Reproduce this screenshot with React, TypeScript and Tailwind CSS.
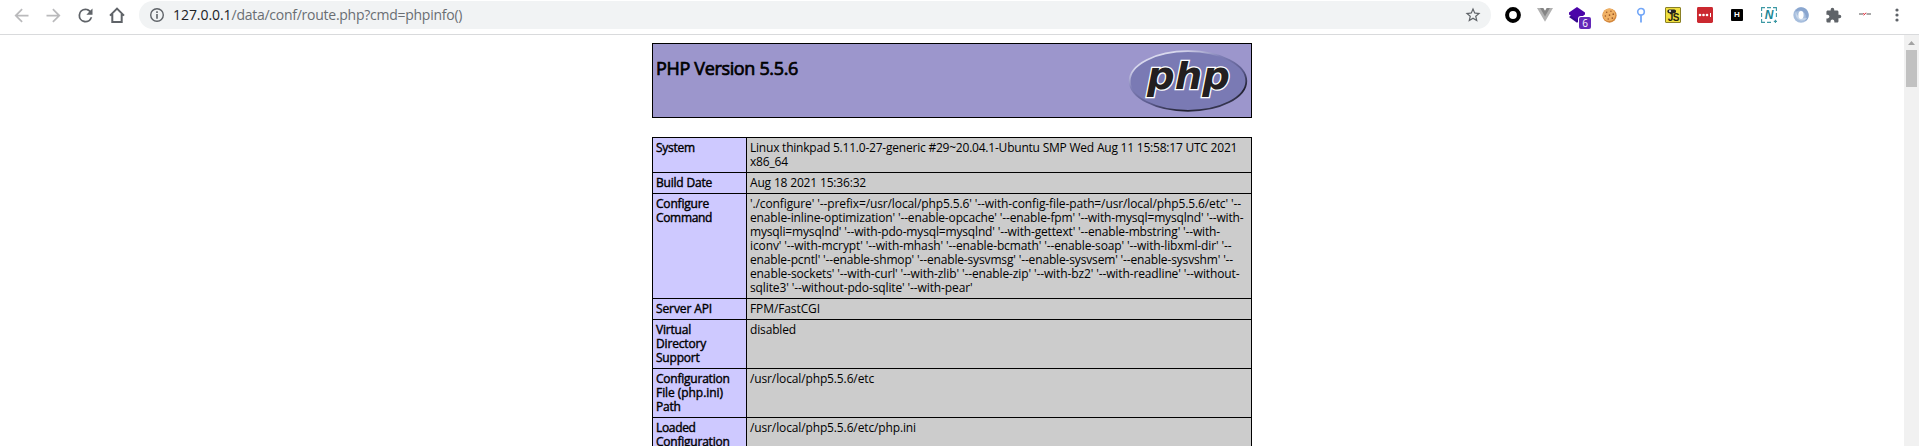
import type { ReactNode } from "react";

type Line = { text: string; spacing: string };

const rows: { label: Line[]; value: Line[] }[] = [
  {
    label: [{ text: "System", spacing: "tracking-[-0.28px]" }],
    value: [
      {
        text: "Linux thinkpad 5.11.0-27-generic #29~20.04.1-Ubuntu SMP Wed Aug 11 15:58:17 UTC 2021",
        spacing: "tracking-[-0.217px]",
      },
      { text: "x86_64", spacing: "tracking-[-0.16px]" },
    ],
  },
  {
    label: [{ text: "Build Date", spacing: "tracking-[-0.2px]" }],
    value: [{ text: "Aug 18 2021 15:36:32", spacing: "tracking-[-0.17px]" }],
  },
  {
    label: [
      { text: "Configure", spacing: "tracking-[-0.19px]" },
      { text: "Command", spacing: "tracking-[-0.33px]" },
    ],
    value: [
      {
        text: "'./configure' '--prefix=/usr/local/php5.5.6' '--with-config-file-path=/usr/local/php5.5.6/etc' '--",
        spacing: "tracking-[-0.114px]",
      },
      {
        text: "enable-inline-optimization' '--enable-opcache' '--enable-fpm' '--with-mysql=mysqlnd' '--with-",
        spacing: "tracking-[-0.147px]",
      },
      {
        text: "mysqli=mysqlnd' '--with-pdo-mysql=mysqlnd' '--with-gettext' '--enable-mbstring' '--with-",
        spacing: "tracking-[-0.156px]",
      },
      {
        text: "iconv' '--with-mcrypt' '--with-mhash' '--enable-bcmath' '--enable-soap' '--with-libxml-dir' '--",
        spacing: "tracking-[-0.12px]",
      },
      {
        text: "enable-pcntl' '--enable-shmop' '--enable-sysvmsg' '--enable-sysvsem' '--enable-sysvshm' '--",
        spacing: "tracking-[-0.155px]",
      },
      {
        text: "enable-sockets' '--with-curl' '--with-zlib' '--enable-zip' '--with-bz2' '--with-readline' '--without-",
        spacing: "tracking-[-0.119px]",
      },
      { text: "sqlite3' '--without-pdo-sqlite' '--with-pear'", spacing: "tracking-[-0.12px]" },
    ],
  },
  {
    label: [{ text: "Server API", spacing: "tracking-[-0.11px]" }],
    value: [{ text: "FPM/FastCGI", spacing: "tracking-[-0.1px]" }],
  },
  {
    label: [
      { text: "Virtual", spacing: "tracking-[-0.2px]" },
      { text: "Directory", spacing: "tracking-[-0.17px]" },
      { text: "Support", spacing: "tracking-[-0.21px]" },
    ],
    value: [{ text: "disabled", spacing: "tracking-[-0.15px]" }],
  },
  {
    label: [
      { text: "Configuration", spacing: "tracking-[-0.23px]" },
      { text: "File (php.ini)", spacing: "tracking-[-0.06px]" },
      { text: "Path", spacing: "tracking-[-0.25px]" },
    ],
    value: [{ text: "/usr/local/php5.5.6/etc", spacing: "tracking-[-0.129px]" }],
  },
  {
    label: [
      { text: "Loaded", spacing: "tracking-[-0.34px]" },
      { text: "Configuration", spacing: "tracking-[-0.23px]" },
    ],
    value: [{ text: "/usr/local/php5.5.6/etc/php.ini", spacing: "tracking-[-0.129px]" }],
  },
];

function Lines({ lines }: { lines: Line[] }) {
  return (
    <>
      {lines.map((l) => (
        <div key={l.text} className={`h-3.5 whitespace-pre ${l.spacing}`}>
          {l.text}
        </div>
      ))}
    </>
  );
}

function Slot({ children }: { children: ReactNode }) {
  return <div className="relative flex h-[30px] w-8 shrink-0 items-center justify-center">{children}</div>;
}

function MaterialIcon({ d, className }: { d: string; className: string }) {
  return (
    <svg viewBox="0 0 24 24" className={`shrink-0 fill-current ${className}`}>
      <path d={d} />
    </svg>
  );
}

function Toolbar() {
  return (
    <header className="flex h-[35px] shrink-0 items-start border-b border-[#d9dadc] bg-white pl-[5px] text-[#5f6368]">
      <Slot>
        <MaterialIcon className="size-[21px] text-[#bababc]" d="M20 11H7.83l5.59-5.59L12 4l-8 8 8 8 1.41-1.41L7.83 13H20v-2z" />
      </Slot>
      <Slot>
        <MaterialIcon className="size-[21px] text-[#bababc]" d="M12 4l-1.41 1.41L16.17 11H4v2h12.17l-5.58 5.59L12 20l8-8z" />
      </Slot>
      <Slot>
        <MaterialIcon
          className="size-[21px]"
          d="M17.65 6.35A7.96 7.96 0 0 0 12 4a8 8 0 1 0 7.73 10h-2.08A6 6 0 1 1 12 6c1.66 0 3.14.69 4.22 1.78L13 11h7V4l-2.35 2.35z"
        />
      </Slot>
      <Slot>
        <svg viewBox="0 0 16 16" className="size-4 fill-none stroke-current stroke-2">
          <path d="M1 8.6L8 1.6l7 7M3.3 7v8h9.4V7" />
        </svg>
      </Slot>
      <div className="mt-px ml-1.5 mr-[6px] flex h-7 flex-1 items-center rounded-full bg-[#f1f3f4] pl-[11px] pr-[9px]">
        <svg viewBox="0 0 14 14" className="size-3.5 shrink-0">
          <circle cx="7" cy="7" r="6.3" className="fill-none stroke-current stroke-[1.4]" />
          <path d="M6.2 3.3h1.6v1.6H6.2zM6.2 6h1.6v4.7H6.2z" className="fill-current" />
        </svg>
        <div className="ml-[9px] flex-1 whitespace-pre font-['Open_Sans',sans-serif] text-sm leading-7">
          <span className="tracking-[-0.06px] text-[#202124]">127.0.0.1</span>
          <span className="tracking-[-0.26px] text-[#6a6e73]">/data/conf/route.php?cmd=phpinfo()</span>
        </div>
        <MaterialIcon
          className="size-[18px]"
          d="M22 9.24l-7.19-.62L12 2 9.19 8.63 2 9.24l5.46 4.73L5.82 21 12 17.27 18.18 21l-1.63-7.03L22 9.24zM12 15.4l-3.76 2.27 1-4.28-3.32-2.88 4.38-.38L12 6.1l1.71 4.04 4.38.38-3.32 2.88 1 4.28L12 15.4z"
        />
      </div>
      <div className="mr-1.5 flex">
        <Slot>
          <svg viewBox="0 0 16 16" className="size-4">
            <circle cx="8" cy="8" r="5.9" fill="none" stroke="#000" strokeWidth="4" />
          </svg>
        </Slot>
        <Slot>
          <svg viewBox="0 0 16 14" className="h-3.5 w-4">
            <path d="M0 0h6.2L8 3l1.8-3H16L8 13.8z" fill="#b1b1b1" />
            <path d="M3.1 0h3.1L8 3l1.8-3h3.1L8 8.4z" fill="#858585" />
          </svg>
        </Slot>
        <Slot>
          <svg viewBox="0 0 16 16" className="size-4">
            <path d="M8 4.5l8 5.5-8 5.8L0 10z" fill="#36068f" />
            <path d="M8 0l8 5.6v2L8 13 0 7.6v-2z" fill="#4a04a8" />
          </svg>
          <span className="absolute top-[17px] left-[18px] flex size-3 items-center justify-center rounded-[2px] bg-[#6327b8] font-['Open_Sans',sans-serif] text-[10px] leading-3 text-white ring-1 ring-white">
            6
          </span>
        </Slot>
        <Slot>
          <svg viewBox="0 0 16 16" className="size-[15px]">
            <circle cx="8" cy="8" r="7.6" fill="#d4883d" />
            <circle cx="7.6" cy="7.2" r="6.7" fill="#f0b164" />
            <g fill="#9a5424">
              <circle cx="5" cy="4.6" r=".8" />
              <circle cx="9.5" cy="3.4" r=".8" />
              <circle cx="8" cy="7.5" r=".9" />
              <circle cx="3.6" cy="8.6" r=".8" />
              <circle cx="12" cy="6.6" r=".9" />
              <circle cx="11" cy="10.7" r=".9" />
              <circle cx="6.6" cy="11.6" r=".8" />
            </g>
          </svg>
        </Slot>
        <Slot>
          <svg viewBox="0 0 16 16" className="size-4" fill="none" stroke="#73a7f8">
            <circle cx="8" cy="4.8" r="3.3" strokeWidth="1.6" />
            <path d="M8 8v7.5" strokeWidth="1.8" />
          </svg>
        </Slot>
        <Slot>
          <div className="relative flex size-4 items-end justify-end rounded-[1px] border border-[#8a8025] bg-[#f0df3f] pr-px font-['Liberation_Sans',sans-serif] text-[10px] leading-[9px] font-bold tracking-[-0.5px] text-[#25240f]">
            JS
            <svg viewBox="0 0 10 5" className="absolute top-px left-px h-[5px] w-2.5">
              <rect x=".4" y=".4" width="8.6" height="3.8" rx="1.6" fill="#222" />
              <circle cx="3" cy="2.2" r="1.1" fill="#ddd" />
            </svg>
          </div>
        </Slot>
        <Slot>
          <svg viewBox="0 0 16 16" className="size-4">
            <rect width="16" height="16" rx="1.4" fill="#cb2930" />
            <g fill="#fff">
              <circle cx="3" cy="8" r="1.3" />
              <circle cx="6.5" cy="8" r="1.3" />
              <circle cx="10" cy="8" r="1.3" />
              <path d="M13 6h1v4h-1z" />
            </g>
          </svg>
        </Slot>
        <Slot>
          <span className="flex size-3 items-center justify-center rounded-[1px] bg-black font-['Liberation_Sans',sans-serif] text-[8px] leading-3 font-bold text-white">
            H
          </span>
        </Slot>
        <Slot>
          <svg viewBox="0 0 16 16" className="size-4">
            <path
              d="M.6 4V.6H4M6 .6h4M12 .6h3.4V4M15.4 6v4M.6 6v4M.6 12v3.4H4M6 15.4h4M12.8 14.4h3.2M14.4 12.8V16"
              fill="none"
              stroke="#3b98a4"
              strokeWidth="1.1"
            />
            <text x="8" y="12.4" textAnchor="middle" fontFamily="Liberation Sans" fontWeight="700" fontStyle="italic" fontSize="12" fill="#1d8796">
              N
            </text>
          </svg>
        </Slot>
        <Slot>
          <svg viewBox="0 0 16 16" className="size-4">
            <circle cx="8" cy="8" r="7.7" fill="#a7bedd" />
            <path d="M8 .3a7.7 7.7 0 0 1 4 14.2C14 10 12.5 5 8 3.6 5 3.2 3 4.5 1.6 6A7.7 7.7 0 0 1 8 .3z" fill="#8aa6cf" />
            <path d="M3 3.6C1.6 8 3.4 12.6 8 13.4c3 .4 5-1 6.4-3A7.7 7.7 0 0 1 3 3.6z" fill="#c6d6ea" />
            <ellipse cx="8" cy="8" rx="2.6" ry="4" fill="#fff" />
          </svg>
        </Slot>
        <Slot>
          <MaterialIcon
            className="size-[17px]"
            d="M20.5 11H19V7c0-1.1-.9-2-2-2h-4V3.5a2.5 2.5 0 0 0-5 0V5H4c-1.1 0-1.99.9-1.99 2v3.8H3.5c1.49 0 2.7 1.21 2.7 2.7s-1.21 2.7-2.7 2.7H2V20c0 1.1.9 2 2 2h3.8v-1.5c0-1.49 1.21-2.7 2.7-2.7s2.7 1.21 2.7 2.7V22H17c1.1 0 2-.9 2-2v-4h1.5a2.5 2.5 0 0 0 0-5z"
          />
        </Slot>
        <Slot>
          <svg viewBox="0 0 14 6" className="mb-0.5 h-1.5 w-3.5">
            <path d="M1 3h4M8.5 3H13" stroke="#555" strokeWidth="1.2" />
            <path d="M5.2 2.2l1.6 1.6M5.4 4.2l2.8-2.4" stroke="#df3340" strokeWidth="1" />
          </svg>
        </Slot>
        <Slot>
          <svg viewBox="0 0 4 14" className="h-3.5 w-1 fill-current">
            <circle cx="2" cy="2" r="1.6" />
            <circle cx="2" cy="7" r="1.6" />
            <circle cx="2" cy="12" r="1.6" />
          </svg>
        </Slot>
      </div>
    </header>
  );
}

function PhpLogo() {
  return (
    <svg viewBox="0 0 120 67" className="h-[67px] w-[120px]">
      <defs>
        <linearGradient id="rim" x1="0.15" y1="0" x2="0.85" y2="1">
          <stop offset="0" stopColor="#dcdcee" />
          <stop offset="0.14" stopColor="#d6d6ec" />
          <stop offset="0.35" stopColor="#7f7fb6" />
          <stop offset="0.6" stopColor="#5a5a8c" />
          <stop offset="0.82" stopColor="#20202f" />
          <stop offset="1" stopColor="#4a4a70" />
        </linearGradient>
      </defs>
      <ellipse cx="60" cy="34" rx="58.3" ry="29.8" fill="#7a7ab4" stroke="url(#rim)" strokeWidth="1.8" />
      <text
        x="19"
        y="41.5"
        textLength="83"
        lengthAdjust="spacingAndGlyphs"
        fontFamily="DejaVu Sans"
        fontWeight="700"
        fontStyle="italic"
        fontSize="38"
        fill="#231f20"
        stroke="#fff"
        strokeWidth="2.6"
        strokeLinejoin="miter"
        paintOrder="stroke"
      >
        php
      </text>
    </svg>
  );
}

export default function App() {
  return (
    <div className="flex h-[446px] w-full flex-col overflow-hidden bg-white">
      <Toolbar />
      <div className="flex min-h-0 flex-1">
        <main className="flex-1 overflow-hidden pt-2 font-['Open_Sans',sans-serif] text-xs leading-3.5 text-black">
          <div className="mx-auto w-[600px]">
            <div className="flex h-[75px] items-start justify-between border border-black bg-[#9c96cc] p-[3px]">
              <h1 className="mt-[9px] text-lg leading-6 tracking-[-0.34px] whitespace-pre [-webkit-text-stroke:0.7px_#000]">
                PHP Version 5.5.6
              </h1>
              <PhpLogo />
            </div>
            <div className="mt-[19px] flex flex-col border-x border-black">
              {rows.map((r) => (
                <div key={r.label.map((l) => l.text).join(" ")} className="flex border-t border-black">
                  <div className="w-[94px] border-r border-black bg-[#cec9ff] p-[3px] [-webkit-text-stroke:0.4px_#000]">
                    <Lines lines={r.label} />
                  </div>
                  <div className="flex-1 bg-[#cccccc] p-[3px]">
                    <Lines lines={r.value} />
                  </div>
                </div>
              ))}
            </div>
          </div>
        </main>
        <div className="flex w-[15px] flex-col items-center bg-[#f1f1f1]">
          <svg viewBox="0 0 7 4" className="mt-1.5 h-1 w-[7px] fill-[#a3a3a3]">
            <path d="M0 4L3.5 0 7 4z" />
          </svg>
          <div className="mt-[5px] h-[37px] w-[11px] bg-[#c1c1c1]" />
        </div>
      </div>
    </div>
  );
}
